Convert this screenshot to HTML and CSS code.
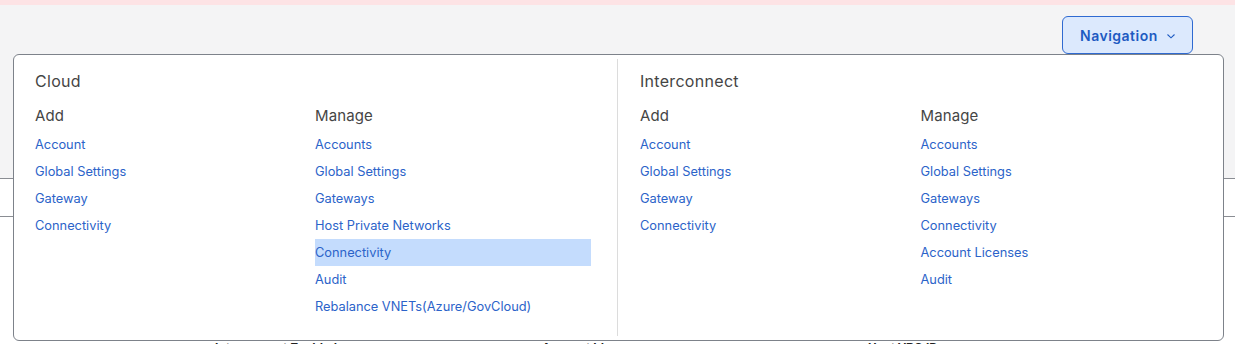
FILE: index.html
```html
<!DOCTYPE html>
<html lang="en">
<head>
    <meta charset="UTF-8">
    <meta name="viewport" content="width=device-width, initial-scale=1.0">
    <title>Navigation</title>
    <link rel="stylesheet" href="styles.css">
</head>
<body>

<div class="alert-strip"></div>

<div class="page">
    <!-- Toolbar with the navigation dropdown -->
    <div class="toolbar">
        <button class="nav-button">
            Navigation
            <svg class="chevron" width="10" height="6" viewBox="0 0 10 6">
                <path d="M1.5 1.5 L5 4.8 L8.5 1.5" fill="none" stroke="currentColor" stroke-width="1.1"/>
            </svg>
        </button>
    </div>

    <!-- Table behind the menu -->
    <div class="table-card">
        <div class="table-row"></div>
        <div class="table-spacer"></div>
        <div class="table-head">
            <span class="col col-1">Interconnect Enabled</span>
            <span class="col col-2">Account Id</span>
            <span class="col col-3">Host VPC ID</span>
        </div>
    </div>

    <!-- Dropdown menu -->
    <div class="menu">
        <div class="menu-section">
            <div class="section-title">Cloud</div>
            <div class="section-columns">
                <div class="menu-column">
                    <div class="column-title">Add</div>
                    <a class="menu-link">Account</a>
                    <a class="menu-link">Global Settings</a>
                    <a class="menu-link">Gateway</a>
                    <a class="menu-link">Connectivity</a>
                </div>
                <div class="menu-column">
                    <div class="column-title">Manage</div>
                    <a class="menu-link">Accounts</a>
                    <a class="menu-link">Global Settings</a>
                    <a class="menu-link">Gateways</a>
                    <a class="menu-link">Host Private Networks</a>
                    <a class="menu-link active">Connectivity</a>
                    <a class="menu-link">Audit</a>
                    <a class="menu-link">Rebalance VNETs(Azure/GovCloud)</a>
                </div>
            </div>
        </div>
        <div class="menu-section second">
            <div class="section-title">Interconnect</div>
            <div class="section-columns">
                <div class="menu-column">
                    <div class="column-title">Add</div>
                    <a class="menu-link">Account</a>
                    <a class="menu-link">Global Settings</a>
                    <a class="menu-link">Gateway</a>
                    <a class="menu-link">Connectivity</a>
                </div>
                <div class="menu-column">
                    <div class="column-title">Manage</div>
                    <a class="menu-link">Accounts</a>
                    <a class="menu-link">Global Settings</a>
                    <a class="menu-link">Gateways</a>
                    <a class="menu-link">Connectivity</a>
                    <a class="menu-link">Account Licenses</a>
                    <a class="menu-link">Audit</a>
                </div>
            </div>
        </div>
    </div>
</div>

</body>
</html>
```

FILE: styles.css
```css
/* Page base */
body {
    font-family: Inter, "Noto Sans", sans-serif;
    margin: 0;
    padding: 0;
    background-color: #f4f4f5;
    overflow: hidden;
    height: 344px;
}

.alert-strip {
    height: 5px;
    background-color: #fde3e5;
}

.page {
    position: relative;
}

/* Toolbar */
.toolbar {
    display: flex;
    justify-content: flex-end;
    padding: 11px 42px 0 0;
    height: 38px;
}

.nav-button {
    display: flex;
    align-items: center;
    gap: 8px;
    width: 131px;
    height: 38px;
    padding: 0 0 0 17px;
    font-family: Inter, sans-serif;
    font-size: 14px;
    font-weight: 600;
    letter-spacing: 0.5px;
    color: #1e5bc2;
    background-color: #dce9fd;
    border: 1px solid #2f6ad1;
    border-radius: 6px;
    cursor: pointer;
}

.chevron {
    margin-top: 2px;
}

/* Table under the menu */
.table-card {
    margin-top: 124px;
    background-color: #ffffff;
    border-top: 1px solid #8a8d93;
}

.table-row {
    height: 37px;
    border-bottom: 1px solid #8a8d93;
}

.table-spacer {
    height: 124px;
}

.table-head {
    display: flex;
    font-family: "Liberation Sans", Arial, sans-serif;
    font-size: 12px;
    font-weight: bold;
    color: #222;
}

.col-1 {
    margin-left: 215px;
}

.col-2 {
    margin-left: 205px;
}

.col-3 {
    margin-left: 264px;
}

/* Dropdown menu */
.menu {
    position: absolute;
    top: 49px;
    left: 13px;
    width: 1209px;
    height: 285px;
    display: flex;
    background-color: #ffffff;
    border: 1px solid #7d828a;
    border-radius: 6px;
}

.menu-section {
    box-sizing: border-box;
    width: 603px;
    flex-shrink: 0;
    padding: 0 22px 0 21px;
    margin: 4px 0;
}

.menu-section.second {
    flex: 1;
    border-left: 1px solid #dcdcdc;
    padding-left: 22px;
}

.section-title {
    font-size: 16px;
    color: #454545;
    letter-spacing: 0.3px;
    margin-top: 7px;
    height: 30px;
    line-height: 30px;
}

.section-columns {
    display: flex;
}

.menu-column {
    display: flex;
    flex-direction: column;
    width: 280px;
}

.second .menu-column {
    width: 281px;
}

.column-title {
    font-size: 15px;
    color: #454545;
    height: 20px;
    line-height: 20px;
    padding: 10px 0 5px;
    letter-spacing: 0.1px;
}

.menu-link {
    display: block;
    width: 276px;
    height: 27px;
    line-height: 27px;
    font-size: 12.8px;
    color: #2b63c9;
    cursor: pointer;
}

.menu-link.active {
    background-color: #c4dcfd;
}
```
